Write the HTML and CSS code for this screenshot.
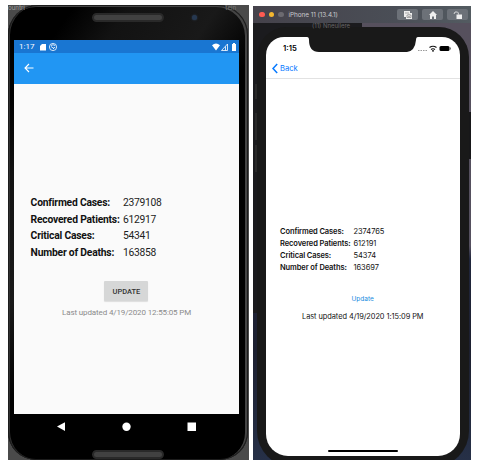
FILE: index.html
```html
<!DOCTYPE html>
<html lang="en">
<head>
<meta charset="utf-8">
<title>Case tracker</title>
<link rel="stylesheet" href="styles.css">
</head>
<body>
<main class="stage">
  <section class="android">
    <span class="backdrop-text left">ountri</span>
    <span class="backdrop-text right">tein</span>
    <div class="android-body">
      <i class="speaker top"></i><i class="camera"></i>
      <div class="android-screen">
        <header class="status"><span>1:17</span>
          <svg width="22" height="12" viewBox="0 0 22 12"><path fill="#fff" d="M3 3h4v6.500H1V5z"/><circle cx="14" cy="6" r="3.600" fill="none" stroke="#fff" stroke-width=".8"/><path d="M12 4.500q2-1.500 4 0M12 5.500l3 2M14 8l2-2" fill="none" stroke="#fff" stroke-width=".8"/></svg>
          <svg class="signals" width="26" height="12" viewBox="0 0 26 12"><path fill="#fff" d="M0 4.200Q4 1 8 4.200L4 9.500zM20 3h1V2h2v1h1v7h-4z"/><path fill="none" stroke="#fff" stroke-width=".8" d="M9.500 9.500L15.500 3v6.500zM13.500 5.500v4"/></svg>
        </header>
        <div class="appbar"><svg width="10" height="10" viewBox="0 0 10 10"><path d="M9.500 5H1.500M5 1L1 5l4 4" fill="none" stroke="#fff" stroke-width="1.100"/></svg></div>
        <div class="android-content">
          <dl class="stats">
            <dt>Confirmed Cases:</dt><dd>2379108</dd>
            <dt>Recovered Patients:</dt><dd>612917</dd>
            <dt>Critical Cases:</dt><dd>54341</dd>
            <dt>Number of Deaths:</dt><dd>163858</dd>
          </dl>
          <button class="update-button">UPDATE</button>
          <p class="updated">Last updated 4/19/2020 12:55:05 PM</p>
        </div>
      </div>
      <nav class="navkeys">
        <svg width="225" height="26" viewBox="0 0 225 26" fill="#fff"><path d="M43 12.500L51 8.300v8.700z"/><circle cx="112.500" cy="12.700" r="4.200"/><path d="M173.500 8.500h8.500V17h-8.500z"/></svg>
      </nav>
      <i class="speaker bottom"></i>
    </div>
  </section>

  <section class="simulator">
    <header class="titlebar">
      <i class="light red"></i><i class="light yellow"></i><i class="light gray"></i>
      <span>iPhone 11 (13.4.1)</span>
      <div class="tools">
        <b><svg width="10" height="10" viewBox="0 0 10 10"><path d="M1 1h6v2h2v6H3V7H1z" fill="#eee"/><path d="M2 3h4M4 5h1l.5-.6h1L7 5h1v2.500H4z" fill="none" stroke="#777" stroke-width=".6"/><circle cx="6" cy="6.200" r=".7" fill="#777"/></svg></b>
        <b><svg width="10" height="10" viewBox="0 0 10 10"><path d="M5 1l4 4H8v4H6V6.500H4V9H2V5H1z" fill="#eee"/></svg></b>
        <b><svg width="10" height="10" viewBox="0 0 10 10"><path d="M3.500 4.500h5.500V9H3.500z" fill="#eee"/><path d="M1 4l1-2h2.500q1 .5 1 2.500" fill="none" stroke="#eee" stroke-width=".8"/></svg></b>
      </div>
    </header>
    <div class="desktop">
      <span class="ghost">(11) Nneullere</span>
      <i class="side-key mute"></i><i class="side-key volume-up"></i><i class="side-key volume-down"></i><i class="side-key power"></i>
      <div class="iphone">
        <div class="iphone-screen">
          <svg class="notch" width="111" height="16" viewBox="0 0 111 16"><path fill="#191919" d="M0 0Q2 0 2 3Q2 15 12 15H100Q108 14 109 3Q109 0 111 0z"/></svg>
          <header class="ios-status"><span>1:15</span>
            <svg width="34" height="10" viewBox="0 0 34 10"><path d="M0 6.500h9" stroke="#999" stroke-dasharray="1.500 1"/><path d="M11.500 3.500q3.500-2.500 7 0M13 5.400q2-1.300 4 0" fill="none" stroke="#111" stroke-width="1.200"/><circle cx="15" cy="6.800" r=".9"/><rect x="21.500" y="2" width="10" height="5" rx="1.500"/><path d="M32.500 3.500v2" stroke="#777"/></svg>
          </header>
          <div class="navigation"><svg width="6" height="11" viewBox="0 0 6 11"><path d="M5.200 1L1 5.500l4.200 4.500" fill="none" stroke="#087aff" stroke-width="1.500"/></svg><span>Back</span></div>
          <div class="ios-content">
            <dl class="stats">
              <dt>Confirmed Cases:</dt><dd>2374765</dd>
              <dt>Recovered Patients:</dt><dd>612191</dd>
              <dt>Critical Cases:</dt><dd>54374</dd>
              <dt>Number of Deaths:</dt><dd>163697</dd>
            </dl>
            <a class="ios-update">Update</a>
            <p class="updated">Last updated 4/19/2020 1:15:09 PM</p>
          </div>
          <i class="home-indicator"></i>
        </div>
      </div>
    </div>
  </section>
</main>
</body>
</html>
```
FILE: styles.css
```css
* { box-sizing: border-box; }
body { margin: 0; background: #fff; }
p, dl, dd { margin: 0; }
svg { display: block; }
.stage { display: flex; gap: 4px; width: 482px; height: 471px; padding: 5px 0 0 8px; }

.android { position: relative; width: 241px; height: 455px; overflow: hidden; background: #4a4a4a; font-family: Roboto, sans-serif; }
.backdrop-text { position: absolute; z-index: 1; top: 0; font-size: 6.500px; line-height: 7px; color: #999; }
.backdrop-text.left { left: 0; }
.backdrop-text.right { right: 13px; color: #777; }
.android-body { position: relative; width: 240px; height: 455px; padding: 35px 8px 0 6px; overflow: hidden; border-radius: 30px 30px 28px 28px; background: linear-gradient(125deg, #000 12%, #121212 22%, #191919 38%, #000 50%); box-shadow: inset 0 0 0 1px #1c1c1c, inset -2px 1px 0 1px #444, inset 2px 0 0 #303030; }
.speaker { position: absolute; left: 83.500px; width: 72px; height: 9px; border: 2px solid #292929; border-radius: 5px; background: #414141; }
.speaker.top { top: 8px; }
.speaker.bottom { bottom: 1px; }
.camera { position: absolute; left: 184px; top: 10px; width: 5px; height: 5px; border-radius: 50%; background: #263850; box-shadow: 0 0 2px #34445b; }
.android-screen { display: flex; flex-direction: column; width: 225px; height: 374px; background: #fafafa; }
.status { display: flex; align-items: center; height: 13px; flex: none; padding: 0 4px 0 5px; background: #1976d2; color: #fff; font-size: 8px; }
.status > span { width: 20px; }
.signals { margin-left: auto; margin-right: -3px; }
.appbar { height: 31px; flex: none; padding: 10px; background: #2196f3; }
.android-content { display: flex; flex-direction: column; padding: 111px 0 0 16.600px; }
.stats { display: grid; }
.stats dt { font-weight: 600; white-space: nowrap; }
.android .stats { grid-template-columns: 92.500px 1fr; grid-auto-rows: 16.600px; font-size: 10.300px; line-height: 16.600px; color: #111; }
.android .stats dt { font-weight: 700; letter-spacing: -.2px; }
.android .stats dd { color: #222; letter-spacing: -.3px; }
.update-button { width: 44px; height: 20px; margin: 20px 0 0 73.800px; padding: 0; border: 0; border-radius: 1px; background: #d6d7d7; box-shadow: 0 1px 1px #ddd; font: 500 7.500px Roboto, sans-serif; color: #333; }
.updated { white-space: nowrap; }
.android .updated { margin: 7px 0 0 31.500px; font-size: 8px; line-height: 10px; letter-spacing: -.13px; color: #8b8b8b; }
.navkeys { width: 225px; height: 26px; background: #000; }

.simulator { width: 218px; height: 454px; margin-top: 1px; overflow: hidden; background: #26262b; font-family: Inter, sans-serif; }
.titlebar { display: flex; align-items: center; height: 17px; padding: 0 1px 0 6px; background: linear-gradient(90deg, #45424b, #4a4e56 65%, #535b61); color: #c9c9cd; font-size: 6.400px; }
.light { width: 5.500px; height: 5.500px; margin-right: 4px; border-radius: 50%; }
.red { background: #ff5b52; }
.yellow { background: #f4b72f; }
.gray { background: #6c6a70; }
.titlebar span { margin-left: 1px; white-space: nowrap; letter-spacing: -.05px; }
.tools { display: flex; gap: 4px; margin-left: auto; margin-right: 2px; }
.tools b { display: grid; place-items: center; width: 21px; height: 11px; border-radius: 2px; background: #6c7178; }
.desktop { position: relative; height: 437px; padding: 4px 2px 0 4px; overflow: hidden; background: linear-gradient(90deg, #1b1b1e 0 50%, transparent 50%) 0 0 / 100% 290px no-repeat, linear-gradient(#56505d 0, #55505f 51%, #20263c 54%, #1d2030 75%, #263047); }
.ghost { position: absolute; z-index: 1; left: 59px; top: 0; font-size: 6px; line-height: 6px; color: #666; white-space: nowrap; }
.side-key { position: absolute; left: 2px; width: 3px; background: #292929; }
.mute { top: 61px; height: 15px; }
.volume-up { top: 90px; height: 27px; }
.volume-down { top: 122px; height: 27px; }
.power { top: 89px; left: auto; right: 0; height: 47px; background: #171719; }
.iphone { position: relative; height: 440px; padding: 10px 9px 0; border-radius: 30px 30px 36px 36px; background: #191919; }
.iphone-screen { position: relative; width: 194px; height: 419px; overflow: hidden; border-radius: 18px 18px 22px 22px; background: #fff; }
.notch { position: absolute; left: 41px; top: 0; }
.ios-status { display: flex; height: 22px; padding: 7px 8px 0 17px; justify-content: space-between; font-size: 7.700px; font-weight: 600; line-height: 10px; }
.navigation { display: flex; align-items: center; height: 20px; padding-left: 6px; gap: 2px; border-bottom: 1px solid #e2e2e2; font-size: 7.600px; color: #087aff; }
.ios-content { padding: 147px 0 0 14px; color: #111; }
.ios-content .stats { grid-template-columns: 73.500px 1fr; grid-auto-rows: 12px; font-size: 7.500px; line-height: 12px; }
.ios-content .stats dt { letter-spacing: -.1px; }
.ios-content .stats dd { letter-spacing: -.05px; }
.ios-update { display: block; margin: 20px 0 0 71.500px; font-size: 6.500px; line-height: 10px; color: #168be0; }
.ios-content .updated { margin: 7px 0 0 22px; font-size: 7.400px; line-height: 11px; letter-spacing: -.05px; }
.home-indicator { position: absolute; left: 62px; bottom: 4px; width: 70px; height: 2px; border-radius: 1px; background: #000; }
```
